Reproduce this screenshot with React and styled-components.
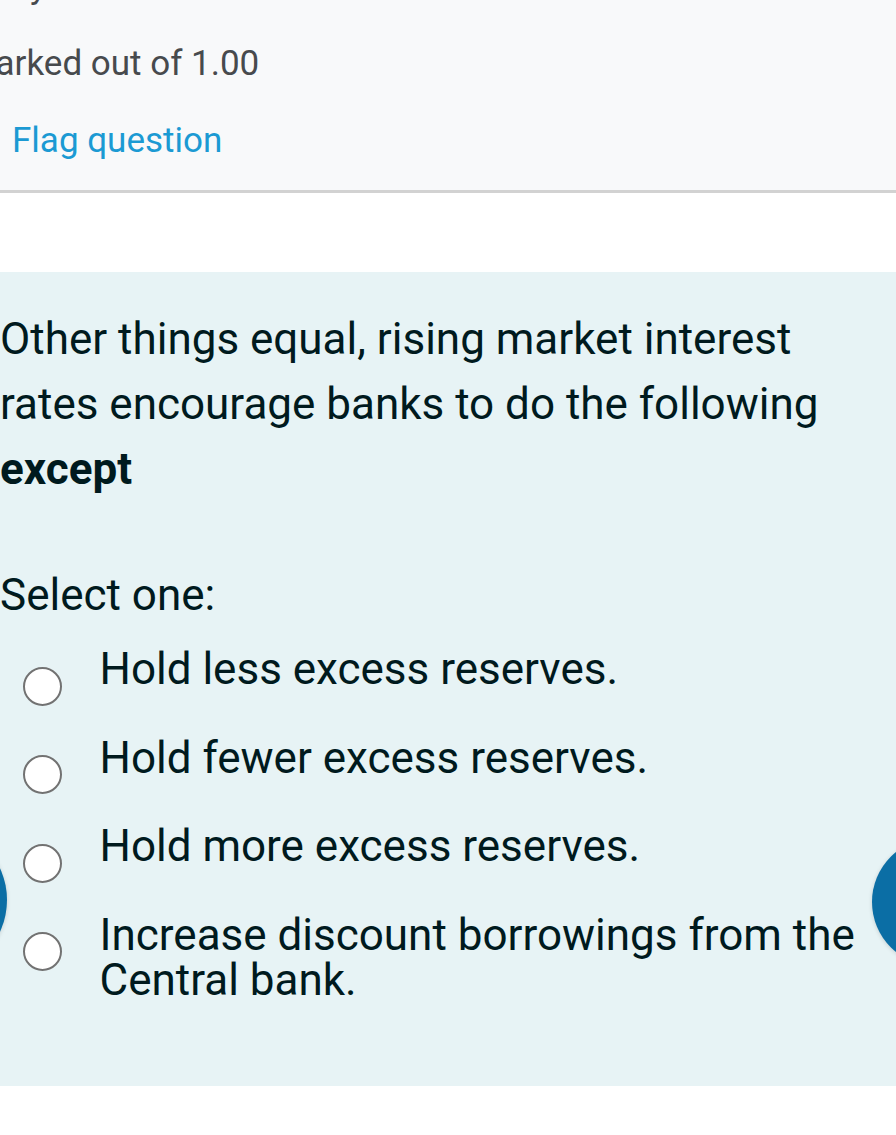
import React from 'react';
import styled, { createGlobalStyle } from 'styled-components';

const GlobalStyle = createGlobalStyle`
  html, body {
    margin: 0;
    padding: 0;
    background: #ffffff;
    overflow: hidden;
  }
  body {
    font-family: Roboto, "Noto Sans", "Liberation Sans", sans-serif;
  }
`;

const Page = styled.div`
  position: relative;
  width: 896px;
  height: 1135px;
  overflow: hidden;
  background: #ffffff;
`;

const Info = styled.div`
  margin-top: -52px;
  padding-bottom: 11px;
  background: #f8f9fa;
  border-bottom: 3px solid #d2d2d2;
`;

const InfoLine = styled.div`
  height: 77px;
  line-height: 77px;
  font-size: 35px;
  white-space: nowrap;
  margin-left: ${p => p.$indent}px;
  color: ${p => (p.$link ? '#1b9ad3' : '#474a4d')};
`;

const Spacer = styled.div`
  height: 79px;
`;

const Formulation = styled.div`
  background: #e7f3f5;
  color: #001a1e;
  padding: 35px 0 83px 0;
  font-size: 44px;
`;

const QText = styled.p`
  margin: 0;
  line-height: 65px;
  width: 860px;

  strong {
    font-weight: 700;
  }
`;

const Prompt = styled.div`
  margin-top: 61px;
  line-height: 65px;
`;

const Answers = styled.div`
  margin-top: 19px;
  display: flex;
  flex-direction: column;
  gap: 30px;
`;

const Option = styled.label`
  display: flex;
  align-items: flex-start;
  padding-left: 23px;
`;

const Radio = styled.span`
  flex: none;
  width: 35px;
  height: 35px;
  margin-top: 19.5px;
  border-radius: 50%;
  border: 2.5px solid #727272;
  background: #ffffff;
`;

const OptionText = styled.span`
  margin-left: 37.5px;
  line-height: 45px;
  max-width: 760px;
`;

const FabRight = styled.div`
  position: absolute;
  left: 872px;
  top: 838px;
  width: 128px;
  height: 128px;
  border-radius: 50%;
  background: #0b6ea5;
  box-shadow: 0 1px 4px rgba(0, 0, 0, 0.15);
`;

const FabLeft = styled.div`
  position: absolute;
  left: -143px;
  top: 825px;
  width: 150px;
  height: 150px;
  border-radius: 50%;
  background: #0b6ea5;
  box-shadow: 0 1px 4px rgba(0, 0, 0, 0.15);
`;

const options = [
  'Hold less excess reserves.',
  'Hold fewer excess reserves.',
  'Hold more excess reserves.',
  'Increase discount borrowings from the Central bank.',
];

export default function App() {
  return (
    <>
      <GlobalStyle />
      <Page>
        <Info>
          <InfoLine $indent={-35}>Not yet answered</InfoLine>
          <InfoLine $indent={-35}>Marked out of 1.00</InfoLine>
          <InfoLine $indent={12} $link>Flag question</InfoLine>
        </Info>
        <Spacer />
        <Formulation>
          <QText>
            Other things equal, rising market interest rates encourage banks to do the following <strong>except</strong>
          </QText>
          <Prompt>Select one:</Prompt>
          <Answers>
            {options.map(text => (
              <Option key={text}>
                <Radio />
                <OptionText>{text}</OptionText>
              </Option>
            ))}
          </Answers>
        </Formulation>
        <FabLeft />
        <FabRight />
      </Page>
    </>
  );
}
